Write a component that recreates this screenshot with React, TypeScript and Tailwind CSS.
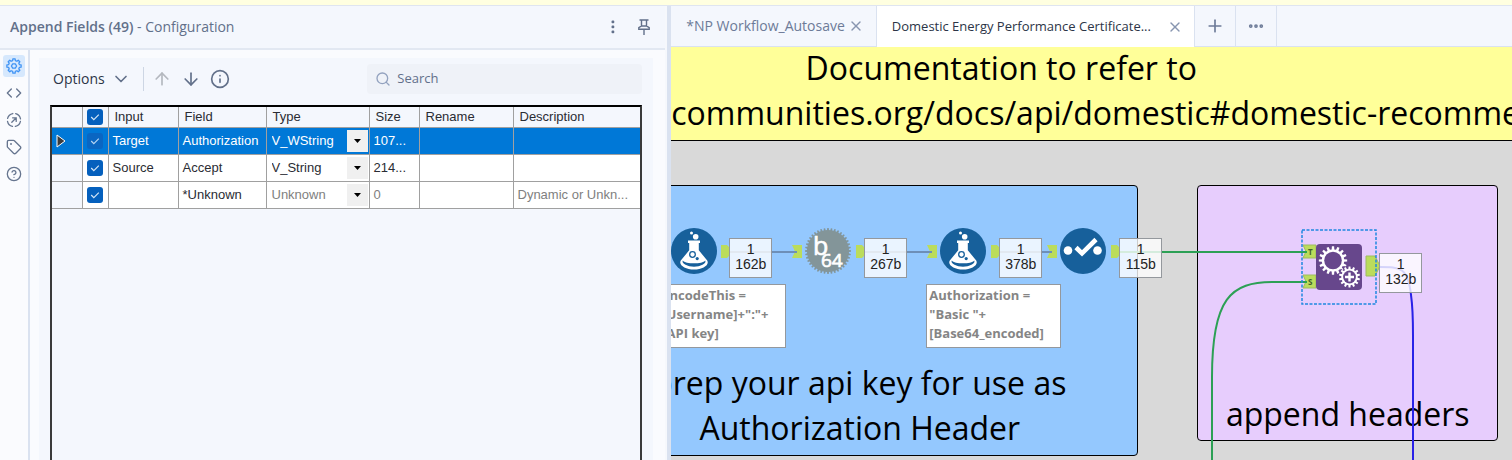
import { useState } from 'react';
import type { ReactNode } from 'react';
import { ArrowDown, ArrowUp, ChevronDown, CircleHelp, Code, Info, MoreHorizontal, Plus, Search, Tag, X } from 'lucide-react';

interface FieldRow {
  input: string;
  field: string;
  type: string;
  size: string;
  rename: string;
  description: string;
  muted?: boolean;
}

const rows: FieldRow[] = [
  { input: 'Target', field: 'Authorization', type: 'V_WString', size: '107...', rename: '', description: '' },
  { input: 'Source', field: 'Accept', type: 'V_String', size: '214...', rename: '', description: '' },
  { input: '', field: '*Unknown', type: 'Unknown', size: '0', rename: '', description: 'Dynamic or Unkn...', muted: true },
];

const columns = ['Input', 'Field', 'Type', 'Size', 'Rename', 'Description'];

// closed outline of a cog, alternating between the two radii
function cogPoints(cx: number, cy: number, outer: number, inner: number, teeth: number) {
  const points: string[] = [];
  const step = (Math.PI * 2) / teeth;
  for (let i = 0; i < teeth; i++) {
    const a = i * step - Math.PI / 2;
    const corners = [
      [inner, -0.3],
      [outer, -0.2],
      [outer, 0.2],
      [inner, 0.3],
    ];
    for (const [r, offset] of corners) {
      const t = a + offset * step;
      points.push(`${(cx + r * Math.cos(t)).toFixed(2)},${(cy + r * Math.sin(t)).toFixed(2)}`);
    }
  }
  return points.join(' ');
}

function CogIcon() {
  return (
    <svg viewBox="0 0 16 16" className="w-4 h-4" fill="none" stroke="currentColor" strokeWidth="1.3" strokeLinejoin="round">
      <polygon points={cogPoints(8, 8, 7.2, 5.6, 8)} />
      <path d="M6.7 5.8h2.6L10.6 8l-1.3 2.2H6.7L5.4 8z" />
    </svg>
  );
}

function NavigateIcon() {
  return (
    <svg viewBox="0 0 16 16" className="w-4 h-4" fill="none" stroke="currentColor" strokeWidth="1.3" strokeLinecap="round">
      <circle cx="8" cy="8" r="6.6" strokeDasharray="7.4 2.97" strokeDashoffset="-1.5" />
      <path d="M5.8 10.2 10 6M6.6 5.8h3.6v3.6" />
    </svg>
  );
}

function PinIcon() {
  return (
    <svg viewBox="0 0 14 16" className="w-3.5 h-4" fill="none" stroke="currentColor" strokeWidth="1.4">
      <path d="M2.5 1h9M4.5 1v6M9.5 1v6M1.8 10.2V8.6L4.5 7h5l2.7 1.6v1.6zM7 10.2V16" />
    </svg>
  );
}

function MoreVerticalIcon() {
  return (
    <svg viewBox="0 0 4 14" className="w-1 h-3.5" fill="currentColor">
      <rect x="0.5" y="0.5" width="2.8" height="2.8" rx="1" />
      <rect x="0.5" y="5.5" width="2.8" height="2.8" rx="1" />
      <rect x="0.5" y="10.5" width="2.8" height="2.8" rx="1" />
    </svg>
  );
}

function Checkbox({ label, dim }: { label: string; dim?: boolean }) {
  const [checked, setChecked] = useState(true);
  return (
    <label className="grid w-4 h-4 mx-auto">
      <input
        type="checkbox"
        aria-label={label}
        checked={checked}
        onChange={(e) => setChecked(e.target.checked)}
        className={`col-start-1 row-start-1 appearance-none w-4 h-4 rounded-[3px] ${dim ? 'bg-[#0a66c2]' : 'bg-[#0560bd]'}`}
      />
      {checked && (
        <svg viewBox="0 0 16 16" className="col-start-1 row-start-1 w-4 h-4 pointer-events-none" fill="none" stroke={dim ? '#b7d5f2' : '#d5e6f7'} strokeWidth="1.2">
          <path d="m4.2 8 2.6 2.6 5-5" />
        </svg>
      )}
    </label>
  );
}

function FieldsTable() {
  return (
    <table className="w-full table-fixed border-collapse text-left font-['Liberation_Sans',sans-serif] text-[13px] leading-5 text-[#2a2c33]">
      <colgroup>
        <col className="w-[30px]" />
        <col className="w-[26px]" />
        <col className="w-[70px]" />
        <col className="w-[88px]" />
        <col className="w-[103px]" />
        <col className="w-[50px]" />
        <col className="w-[94px]" />
        <col />
      </colgroup>
      <thead>
        <tr className="h-5">
          <th className="border-r border-b border-[#a0a0a0]" />
          <th className="border-r border-b border-[#a0a0a0]">
            <Checkbox label="Select all fields" />
          </th>
          {columns.map((name) => (
            <th key={name} className="border-r border-b border-[#a0a0a0] last:border-r-0 px-1.5 font-normal">
              {name}
            </th>
          ))}
        </tr>
      </thead>
      <tbody>
        {rows.map((row, i) => {
          const active = i === 0;
          const cell = 'border-r border-b border-[#a0a0a0] last:border-r-0 px-1 whitespace-nowrap';
          const tone = row.muted ? 'text-[#808080]' : '';
          return (
            <tr key={row.field} className={`h-[27px] ${active ? 'bg-[#0078d7] text-white' : 'bg-white'}`}>
              <td className={`${cell} ${active ? '' : 'bg-[#f4f7fd]'}`}>
                {active && (
                  <svg viewBox="0 0 10 14" className="w-2.5 h-3.5">
                    <path d="M1 1v12l8-6z" fill="#3c3c3c" stroke="#fff" strokeWidth="1" />
                  </svg>
                )}
              </td>
              <td className={cell}>
                <Checkbox label={`Select ${row.field}`} dim={active} />
              </td>
              <td className={cell}>{row.input}</td>
              <td className={cell}>{row.field}</td>
              <td className="border-r border-b border-[#a0a0a0] p-0">
                <div className="grid items-center">
                  <select
                    aria-label={`Type of ${row.field}`}
                    defaultValue={row.type}
                    className={`col-start-1 row-start-1 appearance-none w-full pl-[5px] bg-transparent outline-none ${tone}`}
                  >
                    <option>{row.type}</option>
                  </select>
                  <span className="col-start-1 row-start-1 justify-self-end mr-px w-[21px] h-[22px] flex items-center justify-center bg-[#f0f0f0] pointer-events-none">
                    <svg viewBox="0 0 7 4" className="w-[7px] h-1">
                      <path d="M0 0h7L3.5 4z" fill="#000" />
                    </svg>
                  </span>
                </div>
              </td>
              <td className={`${cell} ${tone}`}>{row.size}</td>
              <td className={cell}>{row.rename}</td>
              <td className={`${cell} ${tone}`}>{row.description}</td>
            </tr>
          );
        })}
      </tbody>
    </table>
  );
}

function RailButton({ label, active, children }: { label: string; active?: boolean; children: ReactNode }) {
  return (
    <button
      aria-label={label}
      className={`w-[22px] h-[22px] flex items-center justify-center rounded-[3px] ${active ? 'bg-[#d6e8fd] text-[#3f93f5]' : 'text-[#66758f]'}`}
    >
      {children}
    </button>
  );
}

function ConfigurationPanel() {
  return (
    <section className="w-[44%] shrink-0 flex flex-col">
      <header className="h-[44px] shrink-0 flex items-center justify-between pl-2.5 pr-3.5 border-b-2 border-[#e2e8f2] bg-[#f4f7fd] text-[#62708a]">
        <h1 className="text-sm">
          <span className="font-semibold">Append Fields (49)</span> - Configuration
        </h1>
        <div className="flex items-center gap-[22px]">
          <button aria-label="More options">
            <MoreVerticalIcon />
          </button>
          <button aria-label="Pin panel">
            <PinIcon />
          </button>
        </div>
      </header>

      <div className="flex-1 min-h-0 flex bg-[#fafbfe]">
        <nav className="w-[30px] shrink-0 flex flex-col items-center gap-[5px] pt-[5px] border-r-2 border-[#dae2f0]">
          <RailButton label="Configuration" active>
            <CogIcon />
          </RailButton>
          <RailButton label="XML view">
            <Code className="w-4 h-4" />
          </RailButton>
          <RailButton label="Navigation">
            <NavigateIcon />
          </RailButton>
          <RailButton label="Annotation">
            <Tag className="w-4 h-4" />
          </RailButton>
          <RailButton label="Help">
            <CircleHelp className="w-4 h-4" />
          </RailButton>
        </nav>

        <div className="flex-1 min-w-0 flex flex-col mt-2 ml-[9px] mr-3 px-[11px] bg-[#f4f7fd]">
          <div className="h-[42px] mb-[5px] shrink-0 flex items-center text-[#62708a]">
            <button className="flex items-center gap-1.5 pl-[3px] text-sm text-[#2c3547]">
              Options
              <ChevronDown className="w-5 h-5 text-[#62708a]" />
            </button>
            <span className="w-px h-6 ml-3 mr-2 bg-[#cdd6e4]" />
            <div className="flex items-center gap-[9px]">
              <button aria-label="Move up" className="text-[#b4b8bf]">
                <ArrowUp className="w-5 h-5" />
              </button>
              <button aria-label="Move down">
                <ArrowDown className="w-5 h-5" />
              </button>
              <button aria-label="Information">
                <Info className="w-5 h-5" />
              </button>
            </div>
            <label className="w-[275px] h-[30px] ml-auto flex items-center gap-1.5 px-2 rounded bg-[#eff2f8]">
              <Search className="w-4 h-4 text-[#93a2bf]" />
              <input
                type="search"
                placeholder="Search"
                aria-label="Search fields"
                className="flex-1 min-w-0 bg-transparent text-[13px] outline-none placeholder:text-[#62708a]"
              />
            </label>
          </div>
          <div className="flex-1 border-2 border-b-0 border-[#3a3a3a] border-t-black">
            <FieldsTable />
          </div>
        </div>
      </div>
    </section>
  );
}

function Tabs() {
  const idle = 'border-r border-b border-[#dae2f0]';
  return (
    <div className="h-[41px] shrink-0 flex text-[#6d7b98]">
      <div className={`flex items-center gap-[3px] pl-[15px] pr-3 ${idle}`}>
        <button className="whitespace-nowrap text-sm">*NP Workflow_Autosave</button>
        <button aria-label="Close NP Workflow_Autosave">
          <X className="w-4 h-4 text-[#8795b0]" />
        </button>
      </div>
      <div className="flex items-center gap-4 pl-[15px] pr-[11px] bg-white border-r border-[#dae2f0]">
        <button className="whitespace-nowrap text-[13px] font-medium text-[#2c3547]">Domestic Energy Performance Certificate...</button>
        <button aria-label="Close Domestic Energy Performance Certificate">
          <X className="w-4 h-4 text-[#8795b0]" />
        </button>
      </div>
      <button aria-label="New workflow" className={`w-[41px] flex items-center justify-center ${idle}`}>
        <Plus className="w-5 h-5" />
      </button>
      <button aria-label="More tabs" className={`w-[41px] flex items-center justify-center ${idle}`}>
        <MoreHorizontal className="w-[18px] h-[18px]" strokeWidth={3} />
      </button>
      <div className="flex-1 border-b border-[#dae2f0]" />
    </div>
  );
}

function FormulaIcon() {
  return (
    <svg viewBox="0 0 46 46" className="w-[46px] h-[46px]">
      <circle cx="23" cy="23" r="23" fill="#17609b" />
      <circle cx="20.5" cy="5" r="1.5" fill="#fff" />
      <circle cx="24.7" cy="8.7" r="2.8" fill="#fff" />
      <path d="M17 12.5h12v2.4h-1.2v7.3l8.4 10.4c2.6 4.4-4.6 8.9-13.2 8.9s-15.8-4.5-13.2-8.9l8.4-10.4v-7.3H17z" fill="#fff" />
      <path d="M11.8 32.5c2.6 3.8 19.8 3.8 22.4 0 1.8 3.2-5.2 6.2-11.2 6.2s-13-3-11.2-6.2z" fill="#17609b" />
      <circle cx="21.5" cy="26.5" r="2.8" fill="none" stroke="#17609b" strokeWidth="1.3" />
      <circle cx="26.2" cy="30.6" r="1.6" fill="#17609b" />
    </svg>
  );
}

function SelectIcon() {
  return (
    <svg viewBox="0 0 46 46" className="w-[46px] h-[46px]">
      <circle cx="23" cy="23" r="23" fill="#17609b" />
      <circle cx="8" cy="22.5" r="4.3" fill="#fff" />
      <circle cx="37.5" cy="22.5" r="4.3" fill="#fff" />
      <path d="m16 19.5 6 5.8L36 11.5" fill="none" stroke="#fff" strokeWidth="4.6" />
    </svg>
  );
}

function Base64Icon() {
  return (
    <svg viewBox="0 0 46 46" className="w-[46px] h-[46px]">
      <polygon points={cogPoints(23, 23, 23, 21, 40)} fill="#839599" />
      <g fill="#fff" stroke="#fff" strokeWidth="0.7" fontFamily="Open Sans">
        <text x="8" y="27" fontSize="25">b</text>
        <text x="16" y="39" fontSize="19">64</text>
      </g>
    </svg>
  );
}

function AppendIcon() {
  return (
    <svg viewBox="0 0 46 46" className="w-[46px] h-[46px]">
      <rect width="46" height="46" rx="4" fill="#67478c" />
      <polygon points={cogPoints(17, 16.5, 14.2, 11.2, 16)} fill="#fff" />
      <circle cx="17" cy="16.5" r="8.8" fill="#67478c" />
      <polygon points={cogPoints(33.5, 33, 11.8, 9.8, 14)} fill="#67478c" />
      <polygon points={cogPoints(33.5, 33, 10.6, 8.2, 14)} fill="#fff" />
      <circle cx="33.5" cy="33" r="6.4" fill="#67478c" />
      <path d="M33.5 28.5v9M29 33h9" stroke="#fff" strokeWidth="2.4" />
    </svg>
  );
}

function RecordCount({ size, className }: { size: string; className: string }) {
  return (
    <div className={`absolute w-[43px] h-10 border border-[#94989d] bg-white/80 text-center font-['Liberation_Sans',sans-serif] text-sm leading-[15px] pt-[3px] text-[#222] ${className}`}>
      <div>1</div>
      <div>{size}</div>
    </div>
  );
}

function Annotation({ lines, className }: { lines: string[]; className: string }) {
  return (
    <div className={`absolute h-16 border border-[#94989d] bg-white px-0.5 pt-px text-[13px] leading-[19px] font-bold text-[#858585] whitespace-nowrap ${className}`}>
      {lines.map((line) => (
        <div key={line}>{line}</div>
      ))}
    </div>
  );
}

// anchors share the wire layer's coordinates
const inputAnchors = [121, 256, 376];
const outputAnchors = [50, 185, 320, 440];

function Wires() {
  return (
    <svg className="absolute inset-0 w-full h-full" fill="none">
      <path d="M58 205h66M193 205h66M328 205h50" stroke="#6d8fb8" strokeWidth="2" />
      <path d="M448 205h187" stroke="#2ca055" strokeWidth="2" />
      {inputAnchors.map((x) => (
        <path key={x} d={`M${x} 198h10v13h-10l3-6.5z`} fill="#bbdc5c" />
      ))}
      {outputAnchors.map((x) => (
        <path key={x} d={`M${x} 198h6l3 3v7l-3 3h-6z`} fill="#bbdc5c" />
      ))}
      <path d="M121 205h5M256 205h5M376 205h5" stroke="#6d8fb8" strokeWidth="2" />
      <path d="M632 198h13v13h-13l3-6.5zM632 228h13v13h-13l3-6.5zM695 209h9l5 10-5 10h-9z" fill="#bbdc5c" stroke="#9dbb60" strokeWidth="1" />
      <path d="M630 205h6" stroke="#2ca055" strokeWidth="2" />
      <path d="M636 235h-34c-42 0-61 16-61 95v200" stroke="#2ca055" strokeWidth="2" />
      <path d="M709 220c20 0 28 0 31 28 2 14 2 26 2 40v242" stroke="#2a22e8" strokeWidth="2" />
      <rect x="631" y="183" width="74" height="74" stroke="#1f88e0" strokeWidth="1.5" strokeDasharray="3 1.5" />
      <g fontSize="8" fontWeight="700" fill="#44612a" fontFamily="Open Sans">
        <text x="637" y="208">T</text>
        <text x="637" y="238">S</text>
      </g>
    </svg>
  );
}

function Canvas() {
  return (
    <main className="relative flex-1 min-h-0 overflow-hidden bg-[#d9d9d9] text-[32px] leading-[45px] text-black">
      <div className="absolute -top-0.5 inset-x-0 h-24 border-b border-black bg-[#ffff99] overflow-hidden whitespace-nowrap">
        <p className="w-[660px] text-center">Documentation to refer to</p>
        <p>communities.org/docs/api/domestic#domestic-recomme</p>
      </div>

      <div className="absolute top-[138px] -left-[90px] w-[557px] h-[271px] flex flex-col justify-end rounded border border-black bg-[#94c8fe] pb-[5px] text-center">
        <p>prep your api key for use as</p>
        <p>Authorization Header</p>
      </div>

      <div className="absolute top-[138px] left-[526px] w-[301px] h-[256px] flex flex-col justify-end rounded border border-black bg-[#e7cdfd] pb-1 text-center">
        <p>append headers</p>
      </div>

      <Wires />

      <div className="absolute top-[181px] left-0"><FormulaIcon /></div>
      <div className="absolute top-[181px] left-[134px]"><Base64Icon /></div>
      <div className="absolute top-[181px] left-[269px]"><FormulaIcon /></div>
      <div className="absolute top-[181px] left-[389px]"><SelectIcon /></div>
      <div className="absolute top-[197px] left-[645px]"><AppendIcon /></div>

      <RecordCount size="162b" className="top-[191px] left-[58px]" />
      <RecordCount size="267b" className="top-[191px] left-[193px]" />
      <RecordCount size="378b" className="top-[191px] left-[328px]" />
      <RecordCount size="115b" className="top-[191px] left-[448px]" />
      <RecordCount size="132b" className="top-[206px] left-[708px]" />

      <Annotation lines={['EncodeThis =', '[Username]+":"+', '[API key]']} className="top-[237px] -left-3 w-[127px]" />
      <Annotation lines={['Authorization =', '"Basic "+', '[Base64_encoded]']} className="top-[237px] left-[255px] w-[135px]" />
    </main>
  );
}

export default function App() {
  return (
    <div className="h-screen flex flex-col overflow-hidden bg-[#f4f7fd] font-['Open_Sans','Noto_Sans',sans-serif]">
      <div className="h-1.5 shrink-0 border-b border-[#dfe5f0] bg-[#ffffe0]" />
      <div className="flex-1 min-h-0 flex">
        <ConfigurationPanel />
        <div className="w-1.5 shrink-0 border-l-2 border-[#f6f8fc] bg-[#dae2f0]" />
        <div className="flex-1 min-w-0 flex flex-col">
          <Tabs />
          <Canvas />
        </div>
      </div>
    </div>
  );
}
